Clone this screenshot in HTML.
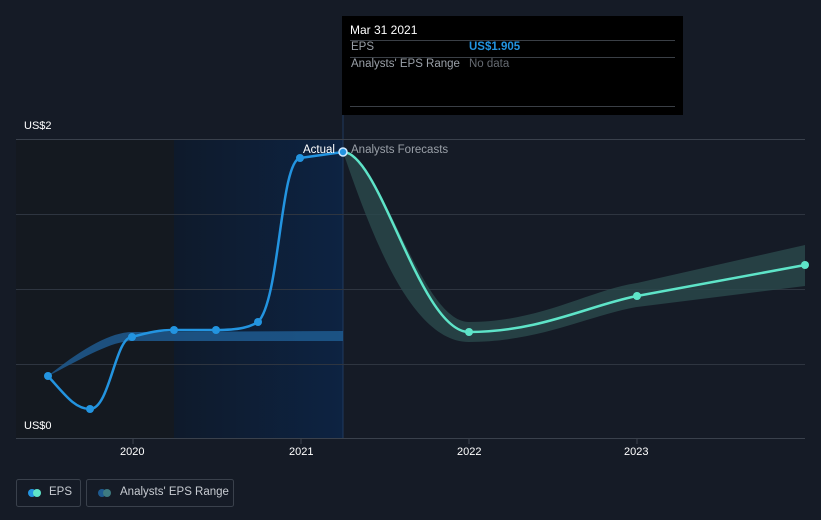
<!DOCTYPE html>
<html><head><style>
body{margin:0;width:821px;height:520px;background:#151b26;font-family:"Liberation Sans",sans-serif;overflow:hidden;position:relative}
.t{position:absolute;font-size:11px;color:#fff}
</style></head><body>
<svg width="821" height="520" style="position:absolute;left:0;top:0">
<defs><linearGradient id="g" x1="0" x2="1"><stop offset="0" stop-color="#0e1a2b"/><stop offset="1" stop-color="#0d2342"/></linearGradient></defs>
<rect x="16" y="139" width="158" height="300" fill="#141920"/>
<rect x="174" y="139" width="169" height="300" fill="url(#g)"/>
<line x1="343" y1="115" x2="343" y2="439" stroke="#1e3a5f" stroke-width="1"/>
<g stroke="#2e3540" stroke-width="1">
<line x1="16" y1="139.5" x2="805" y2="139.5" stroke="#3a414c"/>
<line x1="16" y1="214.5" x2="805" y2="214.5"/>
<line x1="16" y1="289.5" x2="805" y2="289.5"/>
<line x1="16" y1="364.5" x2="805" y2="364.5"/>
<line x1="16" y1="438.5" x2="805" y2="438.5" stroke="#3a414c"/>
</g>
<g stroke="#3a414c"><line x1="133" y1="439" x2="133" y2="444"/><line x1="301" y1="439" x2="301" y2="444"/><line x1="469" y1="439" x2="469" y2="444"/><line x1="637" y1="439" x2="637" y2="444"/></g>
<path d="M48,376 C80,350 110,332 132,332 L343,331 L343,341 L132,341 C110,341 80,360 48,376Z" fill="#1e5a8f" opacity="0.85"/>
<path d="M343,152 C380,152 420,322 469,322 C540,322 590,290 637,283 L805,245 L805,286 L637,307 C590,315 540,342 469,342 C410,342 370,230 343,152Z" fill="#2b4a4c" opacity="0.8"/>
<path d="M48,376 C65,395 75,409 90,409 C110,409 115,337 132,337 C150,332 160,330 174,330 L216,330 C240,330 250,327 258,322 C280,300 280,162 300,158 L343,152" fill="none" stroke="#2394e0" stroke-width="2.5"/>
<path d="M343,152 C380,152 420,332 469,332 C540,332 590,305 637,296 L805,265" fill="none" stroke="#5ee4c8" stroke-width="2.5"/>
<g fill="#2394e0"><circle cx="48" cy="376" r="4"/><circle cx="90" cy="409" r="4"/><circle cx="132" cy="337" r="4"/><circle cx="174" cy="330" r="4"/><circle cx="216" cy="330" r="4"/><circle cx="258" cy="322" r="4"/><circle cx="300" cy="158" r="4"/></g>
<circle cx="343" cy="152" r="4" fill="#2394e0" stroke="#cfe8ff" stroke-width="1.5"/>
<g fill="#5ee4c8"><circle cx="469" cy="332" r="4"/><circle cx="637" cy="296" r="4"/><circle cx="805" cy="265" r="4"/></g>
<rect x="342" y="16" width="341" height="99" fill="#000"/>
<g stroke="#3a3f46"><line x1="350" y1="40.5" x2="675" y2="40.5"/><line x1="350" y1="57.5" x2="675" y2="57.5"/><line x1="350" y1="106.5" x2="675" y2="106.5"/></g>
<rect x="16.5" y="479.5" width="64" height="27" fill="none" stroke="#3a414c" rx="2"/>
<rect x="86.5" y="479.5" width="147" height="27" fill="none" stroke="#3a414c" rx="2"/>
<circle cx="32" cy="493" r="4" fill="#2394e0"/><circle cx="37" cy="493" r="4" fill="#5ee4c8"/>
<circle cx="102" cy="493" r="4" fill="#1e5a8f"/><circle cx="107" cy="493" r="4" fill="#3d7a80"/>
</svg>
<div class="t" style="left:350px;top:23px;font-size:12px">Mar 31 2021</div>
<div class="t" style="left:351px;top:41px;color:#9aa0a8;font-size:11.5px">EPS</div>
<div class="t" style="left:469px;top:41px;color:#2394e0;font-weight:bold;font-size:11.5px">US$1.905</div>
<div class="t" style="left:351px;top:58px;color:#9aa0a8;font-size:11.5px">Analysts' EPS Range</div>
<div class="t" style="left:469px;top:58px;color:#666b72;font-size:11.5px">No data</div>
<div class="t" style="left:24px;top:120px">US$2</div>
<div class="t" style="left:24px;top:420px">US$0</div>
<div class="t" style="left:303px;top:144px;font-size:11.5px">Actual</div>
<div class="t" style="left:351px;top:144px;color:#9aa0a8;font-size:11.5px">Analysts Forecasts</div>
<div class="t" style="left:120px;top:446px">2020</div>
<div class="t" style="left:289px;top:446px">2021</div>
<div class="t" style="left:457px;top:446px">2022</div>
<div class="t" style="left:624px;top:446px">2023</div>
<div class="t" style="left:49px;top:486px;color:#c8ccd2;font-size:11.5px">EPS</div>
<div class="t" style="left:120px;top:486px;color:#c8ccd2;font-size:11.5px">Analysts' EPS Range</div>
</body></html>
